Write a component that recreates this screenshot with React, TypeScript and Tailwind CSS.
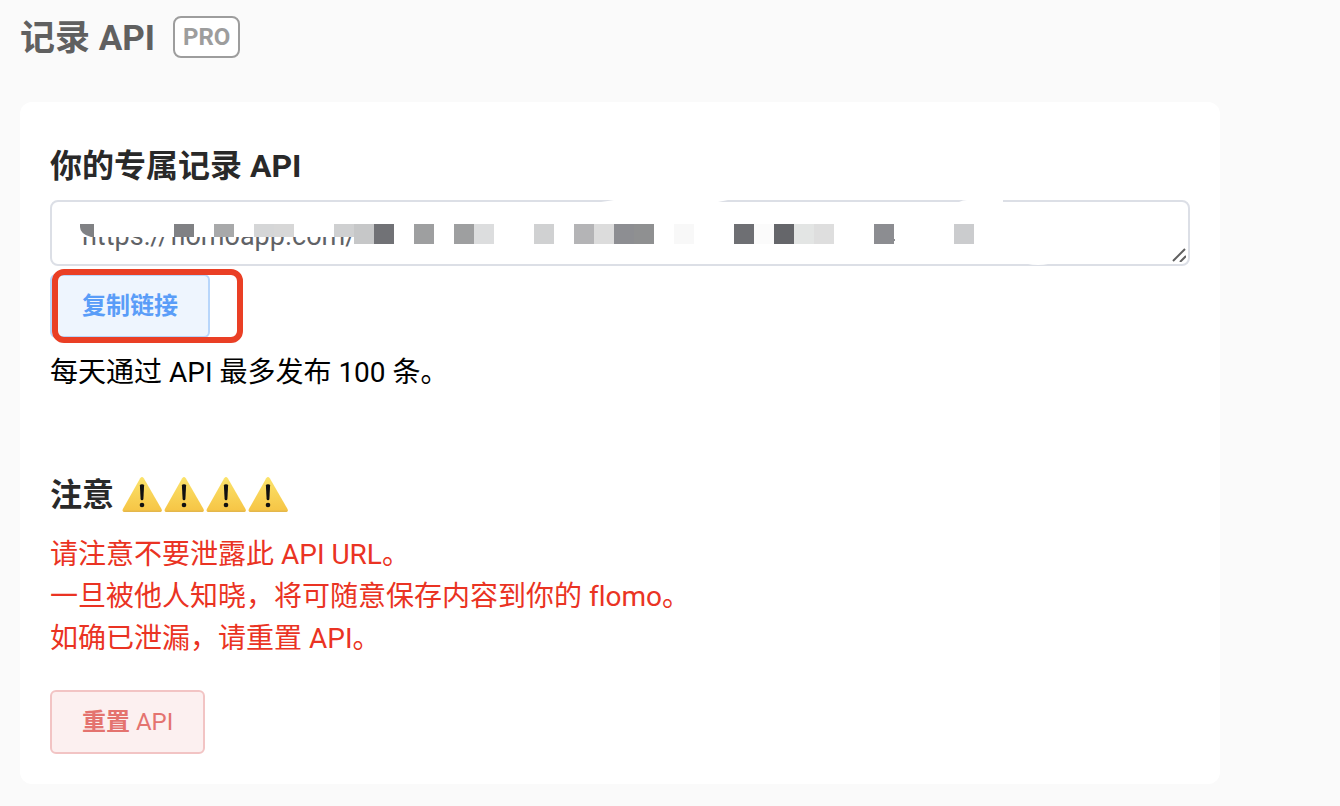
import { useState } from "react";

interface MosaicCell {
  x: number;
  height: number;
  color: string;
}

const MOSAIC: MosaicCell[] = [
  { x: 124, height: 13, color: "#808184" },
  { x: 164, height: 13, color: "#a8a9aa" },
  { x: 204, height: 13, color: "#d5d6d7" },
  { x: 224, height: 13, color: "#d7d7d7" },
  { x: 284, height: 13, color: "#cfd0d1" },
  { x: 304, height: 20, color: "#c6c7c8" },
  { x: 324, height: 20, color: "#717276" },
  { x: 364, height: 20, color: "#9e9fa0" },
  { x: 404, height: 20, color: "#9e9fa0" },
  { x: 424, height: 20, color: "#dcddde" },
  { x: 484, height: 20, color: "#d0d1d2" },
  { x: 524, height: 20, color: "#b4b4b6" },
  { x: 544, height: 20, color: "#dcdcdc" },
  { x: 564, height: 20, color: "#8d8e92" },
  { x: 584, height: 20, color: "#8f9091" },
  { x: 624, height: 20, color: "#f8f8f8" },
  { x: 684, height: 20, color: "#6e6f73" },
  { x: 704, height: 20, color: "#fbfbfb" },
  { x: 724, height: 20, color: "#65666a" },
  { x: 744, height: 20, color: "#e3e5e4" },
  { x: 764, height: 20, color: "#dedede" },
  { x: 824, height: 20, color: "#8c8d91" },
  { x: 904, height: 20, color: "#cbccce" },
];

function Mosaic() {
  return (
    <svg
      className="pointer-events-none absolute left-0 top-0"
      width="1140"
      height="66"
      viewBox="0 0 1140 66"
      aria-hidden="true"
    >
      <path d="M28 14H330V37H28Z" fill="#fff" />
      <path d="M30 24H44V37H41Q30 34 30 27Z" fill="#808184" />
      {/* gaps rubbed out of the border */}
      <path d="M551 2Q558 1 564 0H678Q673 1 668 2Z" fill="#fff" />
      <path d="M909 2Q913 0 917 0H953V2Z" fill="#fff" />
      <path d="M978 64H998Q994 65 988 65Q982 65 978 64Z" fill="#fff" />
      {MOSAIC.map((cell) => (
        <rect key={cell.x} x={cell.x} y="24" width="20" height={cell.height} fill={cell.color} />
      ))}
      <rect x="844" y="39" width="1" height="2" fill="#8c8d91" />
    </svg>
  );
}

function ResizeGrip() {
  return (
    <svg
      className="pointer-events-none absolute bottom-1 right-1"
      width="14"
      height="14"
      viewBox="0 0 14 14"
      fill="none"
      stroke="#606060"
      strokeWidth="2"
      aria-hidden="true"
    >
      <path d="M1 13L13 1M8 14L14 8" />
    </svg>
  );
}

function WarningIcon() {
  return (
    <svg width="42" height="38" viewBox="0 0 42 38" aria-hidden="true">
      <defs>
        <linearGradient id="warning" x1="0" y1="0" x2="0" y2="1">
          <stop offset="0" stopColor="#fbe36b" />
          <stop offset="1" stopColor="#f6c444" />
        </linearGradient>
      </defs>
      <path
        d="M18.2 2.3Q20 -0.5 21.8 2.3L39.5 33Q40.7 36 37.8 36H2.7Q-0.3 36 0.9 33Z"
        fill="url(#warning)"
      />
      <path d="M1.5 34.5Q1.5 36 3 36H37.5Q39.3 36 39.5 34.5Z" fill="#e4b74c" />
      <path d="M17.9 9.5Q17.9 8.3 20 8.3T22.1 9.5L21.4 23Q21.3 24.3 20 24.3T18.6 23Z" fill="#111" />
      <circle cx="20" cy="29" r="2.3" fill="#111" />
    </svg>
  );
}

export default function App() {
  const [url, setUrl] = useState("https://flomoapp.com/");

  return (
    <div className="min-h-screen bg-[#fafafa] px-5 pt-4 pb-5 font-[Roboto,'Noto_Sans_CJK_SC',sans-serif] text-black [font-variant-ligatures:none]">
      <header className="flex h-[42px] items-center gap-[18px]">
        <h1 className="pt-1 text-[35px] font-bold leading-[42px] text-[#606060]">记录 API</h1>
        <span className="flex h-[42px] items-center rounded-lg border-2 border-[#9d9d9d] bg-white px-2 text-2xl font-bold text-[#9d9d9d]">
          PRO
        </span>
      </header>

      <main className="mt-11 max-w-[1200px] rounded-xl bg-white px-[30px] pt-10 pb-[30px]">
        <section>
          <h2 className="text-[32px] font-bold leading-[48px] text-[#292929]">
            <label htmlFor="api-url">你的专属记录 API</label>
          </h2>
          <div className="relative mt-[10px] h-[66px] overflow-hidden">
            <textarea
              id="api-url"
              rows={1}
              value={url}
              onChange={(e) => setUrl(e.target.value)}
              className="block h-[66px] w-full resize-none overflow-hidden rounded-lg border-2 border-[#dcdfe6] bg-white px-[30px] pt-4 text-[27px] leading-[36px] text-[#606266] outline-none"
            />
            <Mosaic />
            <ResizeGrip />
          </div>
          <div className="relative mt-2 w-fit">
            <button
              type="button"
              onClick={() => navigator.clipboard?.writeText(url)}
              className="block h-16 rounded-md border-2 border-[#b8d6fb] bg-[#eef5fe] px-[30px] text-2xl font-bold text-[#5a9df8]"
            >
              复制链接
            </button>
            <div className="pointer-events-none absolute -top-[5px] left-0.5 h-[74px] w-[191px] rounded-xl border-[6px] border-[#ea3f25]" />
          </div>
          <p className="mt-[14px] text-[28px] leading-[42px]">每天通过 API 最多发布 100 条。</p>
        </section>

        <section className="mt-[77px]">
          <h2 className="flex items-center gap-2 text-[32px] font-bold leading-[48px] text-[#292929]">
            注意
            <span className="flex" role="img" aria-label="警告">
              <WarningIcon />
              <WarningIcon />
              <WarningIcon />
              <WarningIcon />
            </span>
          </h2>
          <p className="mt-[15px] text-[28px] leading-[42px] text-[#ea3323]">
            请注意不要泄露此 API URL。
            <br />
            一旦被他人知晓，将可随意保存内容到你的 flomo。
            <br />
            如确已泄漏，请重置 API。
          </p>
          <button
            type="button"
            className="mt-[30px] block h-16 rounded-md border-2 border-[#f2c4c4] bg-[#fcf0f0] px-[30px] text-2xl text-[#e4736f]"
          >
            <span className="font-bold">重置</span> API
          </button>
        </section>
      </main>
    </div>
  );
}
